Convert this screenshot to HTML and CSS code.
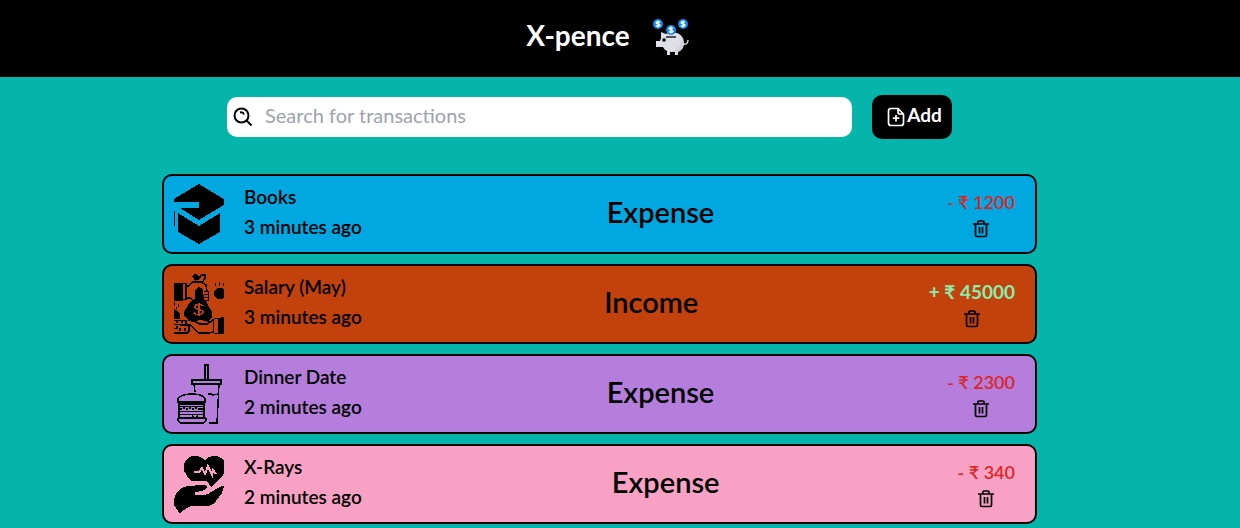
FILE: index.html
```html
<!DOCTYPE html>
<html lang="en">
<head>
	<meta charset="utf-8">
	<title>X-pence</title>
	<meta name="viewport" content="width=device-width, initial-scale=1">
	<link rel="stylesheet" href="styles.css">
</head>
<body>

<!-- shared icons -->
<svg class="sprite" aria-hidden="true">
	<symbol id="trash" viewBox="0 0 20 20">
		<path d="M2 5h16M7 5V3q0-1 1-1h4q1 0 1 1v2M4.500 5v11q0 1.500 1.500 1.500h8q1.500 0 1.500-1.500V5M8.500 8v6.500M11.500 8v6.500" fill="none" stroke="#000" stroke-width="1.700"/>
	</symbol>
</svg>

<header class="header">
	<h1 class="brand">X-pence</h1>
	<svg class="logo" viewBox="0 0 46 46" aria-hidden="true">
		<path d="M35 32c3 1 5-1 5-4" fill="none" stroke="#d5d6dc" stroke-width="1.500"/>
		<path d="M13 20l5 2c3-2 8-2 11-1 5 2 7 6 7 10 0 5-3 8-6 9v3h-3v-3h-5v3h-3v-4c-2-1-3-2-4-4H8v-6h4l1-3z" fill="#dedfe6"/>
		<path d="M20 39c8 1 13-4 14-12 4 7 0 13-9 13z" fill="#cfd1d9"/>
		<path d="M18 25h10" stroke="#222" stroke-width="1.500"/>
		<circle cx="16" cy="28" r="1.800" fill="#000"/>
		<g fill="#0e87f2"><circle cx="10" cy="12" r="5"/><circle cx="35" cy="12" r="5"/><circle cx="23" cy="18" r="5"/></g>
		<g fill="none" stroke="#fff" stroke-width="1.300">
			<path d="M12 10.500c-1-1.300-4-1-4 .2 0 1.500 4 1 4 2.600 0 1.300-3 1.500-4.200.2M10 8.500v7"/>
			<path d="M37 10.500c-1-1.300-4-1-4 .2 0 1.500 4 1 4 2.600 0 1.300-3 1.500-4.200.2M35 8.500v7"/>
			<path d="M25 16.500c-1-1.300-4-1-4 .2 0 1.500 4 1 4 2.600 0 1.300-3 1.500-4.200.2M23 14.500v7"/>
		</g>
	</svg>
</header>

<main class="main">
	<form class="search">
		<label class="search-box">
			<svg class="search-icon" viewBox="0 0 20 20" aria-hidden="true">
				<path d="M13.500 13.500l5 5M7 5.500q3-1 4 2" fill="none" stroke="#000" stroke-width="2"/>
				<circle cx="8.500" cy="8.500" r="7" fill="none" stroke="#000" stroke-width="2"/>
			</svg>
			<input class="search-input" type="text" placeholder="Search for transactions" aria-label="Search for transactions">
		</label>
		<button class="add" type="button">
			<svg class="add-icon" viewBox="0 0 20 20" aria-hidden="true">
				<path d="M12 1.500H5q-2.500 0-2.500 2.500v12q0 2.500 2.500 2.500h10q2.500 0 2.500-2.500V7zM12 1.500V5q0 2 2 2h3.500M10 8v6.500M6.800 11.200h6.500" fill="none" stroke="#fff" stroke-width="1.700"/>
			</svg>
			<span class="add-text">Add</span>
		</button>
	</form>

	<ul class="list">
		<li class="item books">
			<div class="info">
				<svg class="pic" viewBox="0 0 50 60" aria-hidden="true">
					<path d="M25 0l25 15v6L25 36 6 24h19v-6H0v-3zM0 27h1v15H0zM4 29l21 13 21-13v19L25 60 4 48z"/>
				</svg>
				<div class="text"><span>Books</span><span>3 minutes ago</span></div>
			</div>
			<span class="type">Expense</span>
			<div class="side">
				<span class="minus">- ₹ 1200</span>
				<button class="delete" type="button" aria-label="Delete"><svg viewBox="0 0 20 20"><use href="#trash"/></svg></button>
			</div>
		</li>
		<li class="item salary">
			<div class="info">
				<svg class="pic" viewBox="0 0 50 60" aria-hidden="true">
					<path d="M18 2q1-2 4-2l5 3-2 3h-4zM0 9h9v18H0z"/>
					<path d="M25 3l3-2h3v3l-3 5M21 5l1 3M9 9.500h3v16H9M12 12h2l5-4h8l5 3 1 6M12 24h4l3 2" fill="none" stroke="#000" stroke-width="1.500"/>
					<path d="M21 16l4-3 4 2 1 11h2l1 3 5 9v5l-3 3h-9l-8 2-5-3-3-3v-4l4-7 4-5 3-1z"/>
					<path d="M30 17.500h4v3h-4M34 20v3.500h-4M34 23v3.500h-4" fill="none" stroke="#000"/>
					<path d="M29 32c-2-3-8-2-8 1s8 2 8 5-6 4-9 1M25 29v13" fill="none" stroke="#c2410c" stroke-width="1.500"/>
					<path d="M42 15l2-1h4l2 1v8l-2 2h-5l-3-3v-5zM41 9h1v3h-1zM45 8h1v4h-1zM49 9h1v3h-1zM0 28h1v4H0zM4 30h1v3H4zM2 33h1v2H2zM0 35l4 2 2 3v5H0z"/>
					<path d="M0 46.500h12v4H0M0 54.500h3v-3M0 59h13l2-2v-6H6M3 46v3M8 46v3M6 54v3M11 54v3" fill="none" stroke="#000" stroke-width="1.500"/>
					<path d="M14 46l6 1 6 3h7l3-2-4-2h-3M33 50l6-4M39 58l-4 1H25l-9-8" fill="none" stroke="#000" stroke-width="1.500"/>
					<path d="M40 44.500h4M39.500 45v14M40 59.500h5" fill="none" stroke="#000"/>
					<path d="M44 44l6-1v17h-6z"/>
				</svg>
				<div class="text"><span>Salary (May)</span><span>3 minutes ago</span></div>
			</div>
			<span class="type">Income</span>
			<div class="side">
				<span class="plus">+ ₹ 45000</span>
				<button class="delete" type="button" aria-label="Delete"><svg viewBox="0 0 20 20"><use href="#trash"/></svg></button>
			</div>
		</li>
		<li class="item dinner">
			<div class="info">
				<svg class="pic" viewBox="0 0 50 60" aria-hidden="true">
					<g fill="none" stroke="#000" stroke-width="1.500">
						<path d="M31 15V1h3v14M18 16h29v4H18zM20 20l1 8M45 20l-2 39h-8M34 30h3l2 1 5-1"/>
						<path d="M4 38v-3q3-5 14-5t13 5v3zM4 38l1 2h25l1-2M5 41v12M30 41v12M5 42.500h25M6 45h2M9 44h2M12 45h2M15 44h2M18 45h2M21 44h2M24 45h5M5 47.500h25M5 50.500h25M4 54h28M4 54v2q1 3 3 3h21q3 0 4-3v-2M18 52l3 2 3-2"/>
					</g>
				</svg>
				<div class="text"><span>Dinner Date</span><span>2 minutes ago</span></div>
			</div>
			<span class="type">Expense</span>
			<div class="side">
				<span class="minus">- ₹ 2300</span>
				<button class="delete" type="button" aria-label="Delete"><svg viewBox="0 0 20 20"><use href="#trash"/></svg></button>
			</div>
		</li>
		<li class="item xrays">
			<div class="info">
				<svg class="pic" viewBox="0 0 50 60" aria-hidden="true">
					<path d="M31 6c3-3 6-4 10-4 4 0 7 2 9 5v12q-1 3-4 5l-9 9-3-5q-1-1-4-1H17l-4-5c-5-6-4-13 0-17 5-5 13-4 18 1z"/>
					<path d="M20 18h5l3-4 3 6 3-8 4 9 1-5 3 4" fill="none" stroke="#f8a1c4" stroke-width="2"/>
					<path d="M0 46c1-7 6-13 13-14l16-1q4 0 4 2-1 3-5 4l-7 1v3h7q6 0 9-3l7-4q3-2 6-2l-2 7-6 8q-4 5-9 5H18q-6 1-12 8-3-4-6-9z"/>
				</svg>
				<div class="text"><span>X-Rays</span><span>2 minutes ago</span></div>
			</div>
			<span class="type">Expense</span>
			<div class="side">
				<span class="minus">- ₹ 340</span>
				<button class="delete" type="button" aria-label="Delete"><svg viewBox="0 0 20 20"><use href="#trash"/></svg></button>
			</div>
		</li>
	</ul>
</main>

</body>
</html>
```
FILE: styles.css
```css
* {
  box-sizing: border-box;
}

body {
  margin: 0;
  background-color: #05b5ac;
  font-family: Lato, "Noto Sans", sans-serif;
  font-size: 19px;
  font-weight: 600;
  line-height: 30px;
  color: #000;
}

.sprite {
  display: none;
}

.header {
  display: flex;
  justify-content: center;
  align-items: center;
  gap: 18px;
  height: 77px;
  padding: 0 20px 8px 0;
  background-color: #000;
}

.brand {
  margin: 0;
  font-size: 28px;
  font-weight: 700;
  color: #fff;
}

.logo {
  width: 46px;
  height: 46px;
}

.main {
  padding: 18px 203px 4px 162px;
}

.search {
  display: flex;
  align-items: center;
  gap: 20px;
  padding: 0 85px 0 65px;
}

.search-box {
  display: flex;
  align-items: center;
  flex: 1;
  gap: 12px;
  height: 40px;
  padding: 0 6px;
  border-radius: 10px;
  background-color: #fff;
}

.search-icon {
  width: 20px;
  height: 20px;
}

.search-input {
  flex: 1;
  min-width: 0;
  padding: 0 0 4px;
  border: 0;
  outline: 0;
  background: none;
  font: inherit;
  font-size: 20px;
  font-weight: 400;
}

.search-input::placeholder {
  color: #9ca3af;
}

.add {
  display: flex;
  align-items: center;
  justify-content: center;
  gap: 1px;
  width: 80px;
  height: 44px;
  padding: 0 0 0 4px;
  border: 0;
  border-radius: 10px;
  background-color: #000;
  color: #fff;
  font: inherit;
  font-weight: 700;
}

.add-icon {
  width: 20px;
  height: 20px;
}

.add-text {
  padding-bottom: 4px;
}

.list {
  display: flex;
  flex-direction: column;
  gap: 10px;
  margin: 35px 0 0;
  padding: 0;
  list-style: none;
}

.item {
  display: flex;
  justify-content: space-between;
  align-items: center;
  height: 80px;
  padding: 0 20px 0 10px;
  border: 2px solid #000;
  border-radius: 10px;
}

.books { background-color: #00a7e1; }
.salary { background-color: #c2410c; }
.dinner { background-color: #b57edc; }
.xrays { background-color: #f8a1c4; }

.info {
  display: flex;
  align-items: center;
  gap: 20px;
  padding-right: 12px;
}

.pic {
  width: 50px;
  height: 60px;
  shape-rendering: crispEdges;
}

.text,
.side {
  display: flex;
  flex-direction: column;
}

.text {
  padding-bottom: 4px;
}

.type {
  padding-bottom: 4px;
  font-size: 29px;
}

.side {
  align-items: center;
}

.minus,
.plus {
  padding-bottom: 4px;
  line-height: 26px;
}

.minus {
  font-size: 18px;
  color: #dc2626;
}

.plus {
  color: #86efac;
  font-weight: 700;
}

.delete {
  display: flex;
  padding: 0;
  border: 0;
  background: none;
}

.delete svg {
  width: 20px;
  height: 20px;
}
```
